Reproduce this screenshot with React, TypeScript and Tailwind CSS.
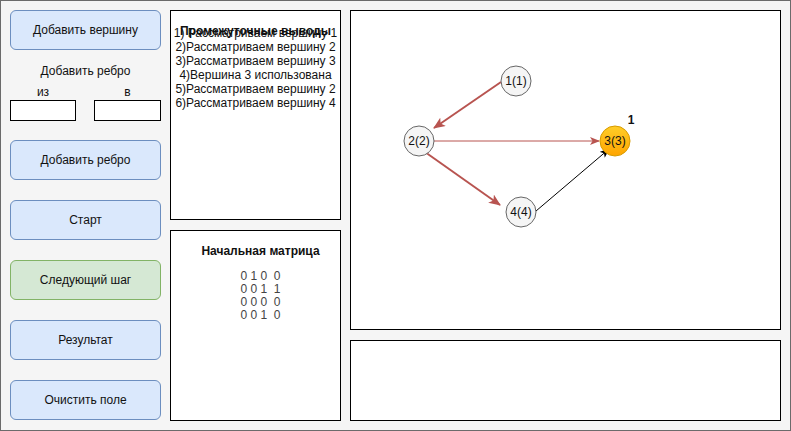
const font = { fontFamily: '"Liberation Sans", Arial, sans-serif' }

function Button({ label, green }: { label: string; green?: boolean }) {
  return (
    <div
      className={
        'flex h-[40px] w-full items-center justify-center rounded-[6px] border text-[12px] text-[#111] ' +
        (green ? 'border-[#82b366] bg-[#d5e8d4]' : 'border-[#6c8ebf] bg-[#dae8fc]')
      }
    >
      {label}
    </div>
  )
}

const steps = [
  '1) Рассматриваем вершину 1',
  '2)Рассматриваем вершину 2',
  '3)Рассматриваем вершину 3',
  '4)Вершина 3 использована',
  '5)Рассматриваем вершину 2',
  '6)Рассматриваем вершину 4',
]

const matrix = ['0 1 0  0', '0 0 1  1', '0 0 0  0', '0 0 1  0']

function Node({ x, y, label, active }: { x: number; y: number; label: string; active?: boolean }) {
  return (
    <g>
      <circle
        cx={x}
        cy={y}
        r={15}
        fill={active ? 'url(#gold)' : '#f5f5f5'}
        stroke={active ? '#d79b00' : '#666666'}
        strokeWidth={1}
      />
      <text x={x} y={y + 4} textAnchor="middle" fontSize={12} fill="#111" style={font}>
        {label}
      </text>
    </g>
  )
}

function Graph() {
  return (
    <svg width={429} height={318} viewBox="351 11 429 318" className="block">
      <defs>
        <linearGradient id="gold" x1="0" y1="0" x2="0" y2="1">
          <stop offset="0" stopColor="#ffcd28" />
          <stop offset="1" stopColor="#ffa500" />
        </linearGradient>
        <marker id="redBig" viewBox="0 0 12 10" refX="11" refY="5" markerWidth="12" markerHeight="10" markerUnits="userSpaceOnUse" orient="auto">
          <path d="M0,0 L12,5 L0,10 L3,5 Z" fill="#b85450" />
        </marker>
        <marker id="redSmall" viewBox="0 0 10 8" refX="9" refY="4" markerWidth="10" markerHeight="8" markerUnits="userSpaceOnUse" orient="auto">
          <path d="M0,0 L10,4 L0,8 L2.5,4 Z" fill="#b85450" />
        </marker>
        <marker id="black" viewBox="0 0 10 8" refX="9" refY="4" markerWidth="10" markerHeight="8" markerUnits="userSpaceOnUse" orient="auto">
          <path d="M0,0 L10,4 L0,8 L2.5,4 Z" fill="#000" />
        </marker>
      </defs>
      <line x1={501} y1={82} x2={434} y2={128} stroke="#b85450" strokeWidth={2} markerEnd="url(#redBig)" />
      <line x1={434} y1={141} x2={599} y2={141} stroke="#b85450" strokeWidth={1} markerEnd="url(#redSmall)" />
      <line x1={425} y1={152} x2={500} y2={205} stroke="#b85450" strokeWidth={2} markerEnd="url(#redBig)" />
      <line x1={536} y1={211} x2={609} y2={149} stroke="#000" strokeWidth={1} markerEnd="url(#black)" />
      <Node x={516} y={81} label="1(1)" />
      <Node x={419} y={141} label="2(2)" />
      <Node x={615} y={141} label="3(3)" active />
      <Node x={521} y={212} label="4(4)" />
      <text x={631} y={124} textAnchor="middle" fontSize={12} fontWeight="bold" fill="#111" style={font}>
        1
      </text>
    </svg>
  )
}

export default function App() {
  return (
    <div
      style={font}
      className="box-border flex h-[431px] w-[791px] gap-[9px] border border-[#6b6b6b] bg-[#f5f5f5] p-[9px]"
    >
      <div className="flex w-[151px] flex-col">
        <Button label="Добавить вершину" />
        <div className="mt-[14px] h-[14px] text-center text-[12px] leading-[14px] text-[#111]">Добавить ребро</div>
        <div className="mt-[7px] flex h-[14px] text-[12px] leading-[14px] text-[#111]">
          <div className="w-[66px] text-center">из</div>
          <div className="ml-auto w-[67px] text-center">в</div>
        </div>
        <div className="mt-[1px] flex justify-between">
          <div className="h-[21px] w-[66px] border border-black bg-white" />
          <div className="h-[21px] w-[67px] border border-black bg-white" />
        </div>
        <div className="mt-[19px] flex flex-col gap-[20px]">
          <Button label="Добавить ребро" />
          <Button label="Старт" />
          <Button label="Следующий шаг" green />
          <Button label="Результат" />
          <Button label="Очистить поле" />
        </div>
      </div>

      <div className="flex w-[171px] flex-col gap-[10px]">
        <div className="relative h-[210px] border border-black bg-white">
          <div className="absolute left-0 right-0 top-[13px] text-center text-[12px] font-bold leading-[14px] text-[#111]">
            Промежуточные выводы
          </div>
          <div className="pt-[15px] text-center text-[12px] leading-[14px] text-[#111]">
            {steps.map((s) => (
              <div key={s} className="whitespace-nowrap">
                {s}
              </div>
            ))}
          </div>
        </div>
        <div className="h-[191px] border border-black bg-white pl-[10px]">
          <div className="mt-[13px] text-center text-[12px] font-bold leading-[14px] text-[#111]">
            Начальная матрица
          </div>
          <div className="mt-[12px] text-center text-[12px] leading-[13px] text-[#444]">
            {matrix.map((row, i) => (
              <div key={i} className="whitespace-pre">
                {row}
              </div>
            ))}
          </div>
        </div>
      </div>

      <div className="flex w-[431px] flex-col gap-[10px]">
        <div className="h-[320px] border border-black bg-white">
          <Graph />
        </div>
        <div className="h-[81px] border border-black bg-white" />
      </div>
    </div>
  )
}
